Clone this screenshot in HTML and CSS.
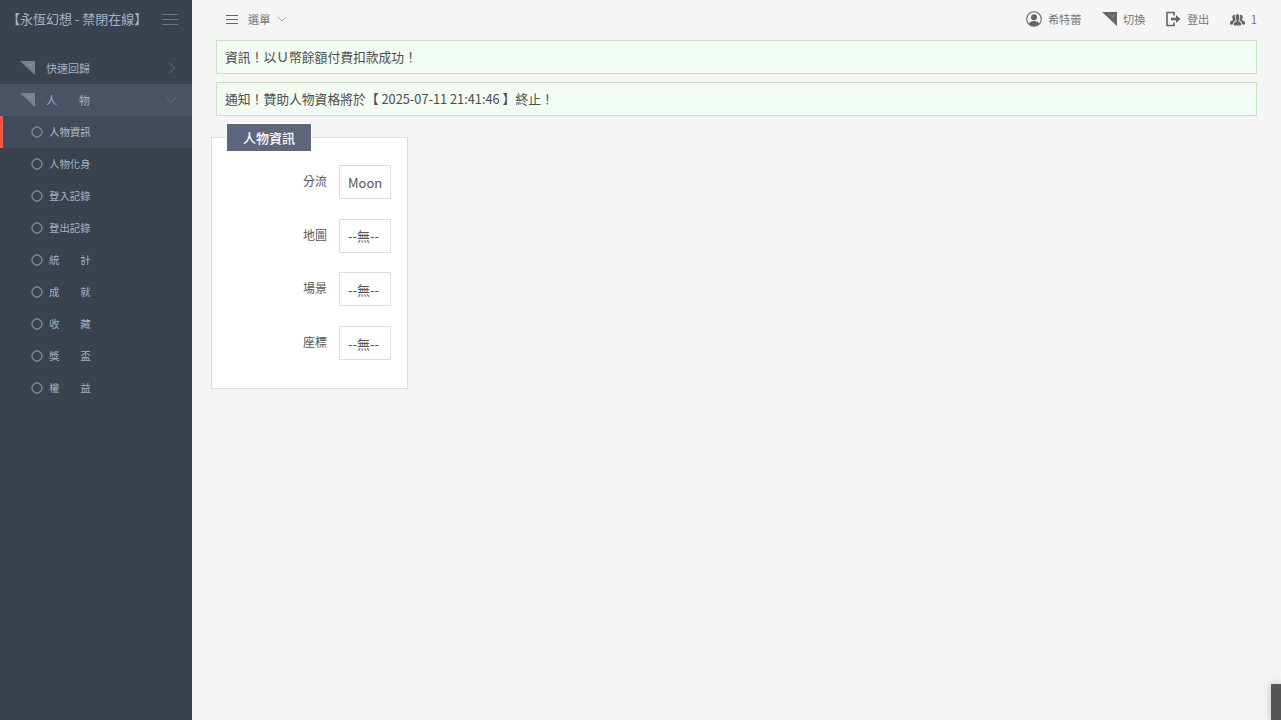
FILE: index.html

```html
<!DOCTYPE html>
<html lang="zh-Hant">
<head>
  <meta charset="UTF-8">
  <title>永恆幻想 - 禁閉在線</title>
  <link rel="stylesheet" href="styles.css">
</head>
<body>

<svg class="defs" width="0" height="0">
  <symbol id="fold" viewBox="0 0 15 14">
    <path d="M0 0H15V14Z" fill="currentColor"/>
    <path d="M8.5 3L10.3 4.8L12 2.6" fill="none" stroke="#9aa1ad" stroke-width=".8"/>
  </symbol>
  <symbol id="ring" viewBox="0 0 12 12">
    <circle cx="6" cy="6" r="5" fill="none" stroke="currentColor" stroke-width="1.5"/>
  </symbol>
</svg>

<aside class="sidebar">
  <div class="brand">
    <span class="brand-name">【永恆幻想 - 禁閉在線】</span>
    <svg class="burger" viewBox="0 0 16 12"><path d="M0 .5H16M0 5.5H16M0 10.5H16" stroke="currentColor" fill="none"/></svg>
  </div>
  <nav class="menu">
    <a class="menu-item">
      <svg class="fold"><use href="#fold"/></svg>
      <span>快速回歸</span>
      <svg class="arrow" viewBox="0 0 8 12"><path d="M1.5 1L6.5 6L1.5 11" stroke="currentColor" fill="none"/></svg>
    </a>
    <a class="menu-item open">
      <svg class="fold"><use href="#fold"/></svg>
      <span>人　　物</span>
      <svg class="arrow down" viewBox="0 0 12 8"><path d="M1 1.5L6 6.5L11 1.5" stroke="currentColor" fill="none"/></svg>
    </a>
    <a class="sub-item active"><svg class="ring"><use href="#ring"/></svg><span>人物資訊</span></a>
    <a class="sub-item"><svg class="ring"><use href="#ring"/></svg><span>人物化身</span></a>
    <a class="sub-item"><svg class="ring"><use href="#ring"/></svg><span>登入記錄</span></a>
    <a class="sub-item"><svg class="ring"><use href="#ring"/></svg><span>登出記錄</span></a>
    <a class="sub-item"><svg class="ring"><use href="#ring"/></svg><span>統　　計</span></a>
    <a class="sub-item"><svg class="ring"><use href="#ring"/></svg><span>成　　就</span></a>
    <a class="sub-item"><svg class="ring"><use href="#ring"/></svg><span>收　　藏</span></a>
    <a class="sub-item"><svg class="ring"><use href="#ring"/></svg><span>獎　　盃</span></a>
    <a class="sub-item"><svg class="ring"><use href="#ring"/></svg><span>權　　益</span></a>
  </nav>
</aside>

<main class="main">
  <header class="topbar">
    <div class="top-left">
      <svg class="top-burger" viewBox="0 0 12 9"><path d="M0 .5H12M0 4.5H12M0 8.5H12" stroke="currentColor" fill="none"/></svg>
      <span>選單</span>
      <svg class="top-caret" viewBox="0 0 10 6"><path d="M1 1L5 5L9 1" stroke="currentColor" fill="none"/></svg>
    </div>
    <div class="top-right">
      <a class="top-link">
        <svg class="top-icon" viewBox="0 0 16 16">
          <circle cx="8" cy="8" r="7.3" fill="none" stroke="currentColor" stroke-width="1.1"/>
          <circle cx="8" cy="6.2" r="3" fill="currentColor"/>
          <path d="M2.8 13C3.5 10.8 5.5 10 8 10S12.5 10.8 13.2 13C11.8 14.4 10 15 8 15S4.2 14.4 2.8 13Z" fill="currentColor"/>
        </svg>
        <span>希特蕾</span>
      </a>
      <a class="top-link">
        <svg class="top-icon narrow fold-top"><use href="#fold"/></svg>
        <span>切換</span>
      </a>
      <a class="top-link">
        <svg class="top-icon narrow" viewBox="0 0 15 15">
          <path d="M8 4V1H1V14H8V11" fill="none" stroke="currentColor" stroke-width="1.6"/>
          <path d="M5 6.3H10V3.6L14.5 7.5L10 11.4V8.7H5Z" fill="currentColor"/>
        </svg>
        <span>登出</span>
      </a>
      <a class="top-link">
        <svg class="top-icon narrow" viewBox="0 0 15 13">
          <path d="M0 12V10C0 8.8 2 8.3 3.2 7.6C2.4 6.6 2.2 5.4 2.3 4.2C2.5 2.7 3.4 2.2 4.4 2.2C4.8 2.2 5.1 2.3 5.4 2.4C4.9 3.2 4.7 4.2 4.9 5.4C5 6.4 5.3 7.2 5.8 7.9C4.6 8.7 3.2 9.1 3.2 10.6V12Z" fill="currentColor"/>
          <path d="M15 12V10C15 8.8 13 8.3 11.8 7.6C12.6 6.6 12.8 5.4 12.7 4.2C12.5 2.7 11.6 2.2 10.6 2.2C10.2 2.2 9.9 2.3 9.6 2.4C10.1 3.2 10.3 4.2 10.1 5.4C10 6.4 9.7 7.2 9.2 7.9C10.4 8.7 11.8 9.1 11.8 10.6V12Z" fill="currentColor"/>
          <path d="M4 13V10.8C4 9.6 6 9.2 6.8 8.4C6 7.5 5.6 6.2 5.7 4.6C5.8 2.9 6.6 1.6 7.5 1.6S9.2 2.9 9.3 4.6C9.4 6.2 9 7.5 8.2 8.4C9 9.2 11 9.6 11 10.8V13Z" fill="currentColor"/>
        </svg>
        <span>1</span>
      </a>
    </div>
  </header>

  <div class="alerts">
    <div class="alert">資訊！以Ｕ幣餘額付費扣款成功！</div>
    <div class="alert">通知！贊助人物資格將於【 2025-07-11 21:41:46 】終止！</div>
  </div>

  <section class="panel">
    <h2 class="panel-title">人物資訊</h2>
    <div class="field"><label>分流</label><div class="value">Moon</div></div>
    <div class="field"><label>地圖</label><div class="value">--無--</div></div>
    <div class="field"><label>場景</label><div class="value">--無--</div></div>
    <div class="field"><label>座標</label><div class="value">--無--</div></div>
  </section>
</main>

<div class="corner"></div>

</body>
</html>
```

FILE: styles.css

```css
* { box-sizing: border-box; margin: 0; padding: 0; }
html, body { width: 100%; height: 100%; overflow: hidden; }
body {
  display: flex;
  background: #f5f5f5; color: #555;
  font-family: "Noto Sans CJK TC", "Noto Sans", sans-serif;
}
.defs { position: absolute; }

/* sidebar */
.sidebar {
  flex: 0 0 192px; height: 100%;
  background: #3a4250; color: #a7b1c2;
}
.brand {
  display: flex; align-items: center; justify-content: space-between;
  height: 38px; padding: 0 14px 2px 8px;
  font-size: 13px; white-space: nowrap;
}
.brand-name { margin-left: -1px; }
.burger { width: 16px; height: 12px; color: #6f7786; margin-top: 3px; }
.menu { margin-top: 14px; }
.menu-item {
  display: flex; align-items: center;
  height: 32px; padding: 0 15px 0 20px;
  font-size: 11px;
}
.menu-item span { margin-left: 11px; flex: 1; }
.menu-item.open { background: #4a5365; }
.fold { width: 15px; height: 14px; color: #79818f; margin-top: -1px; }
.arrow { width: 8px; height: 12px; color: #687080; margin-right: 1px; }
.arrow.down { width: 12px; height: 8px; margin-right: 0; }
.sub-item {
  display: flex; align-items: center;
  height: 32px; padding-left: 31px;
  font-size: 10.4px;
}
.sub-item span { margin: -2px 0 0 6px; white-space: nowrap; }
.sub-item.active {
  background: #414a5a; color: #b3bccb;
  border-left: 3px solid #f0584a; padding-left: 28px;
}
.ring { width: 12px; height: 12px; color: #7b838f; }

/* top */
.main { flex: 1; min-width: 0; padding: 0 24px 0 19px; }
.topbar {
  display: flex; align-items: center; justify-content: space-between;
  height: 38px; padding: 0 0 0 15px;
  font-size: 11.2px; color: #777;
}
.top-left { display: flex; align-items: center; }
.top-burger { width: 12px; height: 9px; color: #666; margin-right: 10px; }
.top-caret { width: 10px; height: 6px; margin-left: 7px; color: #aaa; }
.top-right { display: flex; align-items: center; gap: 20.5px; }
.top-link { display: flex; align-items: center; gap: 6px; }
.top-icon { width: 16px; height: 16px; color: #666; }
.top-icon.narrow { width: 15px; }
.fold-top { height: 14px; }

/* alerts */
.alerts { margin-left: 5px; margin-top: 2px; }
.alert {
  height: 34px; padding: 0 8px 2px; margin-bottom: 8px;
  display: flex; align-items: center;
  background: #f3fcf3; border: 1px solid #c6e4c0;
  font-size: 12.8px; color: #4d4d4d;
  white-space: pre;
}

/* panel */
.panel {
  position: relative;
  width: 197px; height: 252px;
  margin-top: 21px; padding: 27px 16px 0 0;
  background: #fff; border: 1px solid #ddd;
}
.panel-title {
  position: absolute; left: 15px; top: -14px;
  width: 84px; height: 27px; line-height: 27px;
  text-align: center;
  background: #5d667c; color: #fff;
  font-size: 13px; font-weight: 500;
  box-shadow: 0 0 0 1px #fff;
}
.field {
  display: flex; align-items: center; justify-content: flex-end;
  gap: 12px; height: 34px; margin-bottom: 19.7px;
}
.field label { font-size: 12px; color: #555; margin-top: -3px; }
.value {
  width: 52px; height: 34px;
  display: flex; align-items: center; padding-left: 8px;
  background: #fff; border: 1px solid #ddd;
  font-size: 13px; color: #555;
}

.corner {
  position: absolute; right: 0; bottom: 0;
  width: 10px; height: 36px;
  background: #555; box-shadow: 0 0 8px rgba(0,0,0,.25);
}
```
